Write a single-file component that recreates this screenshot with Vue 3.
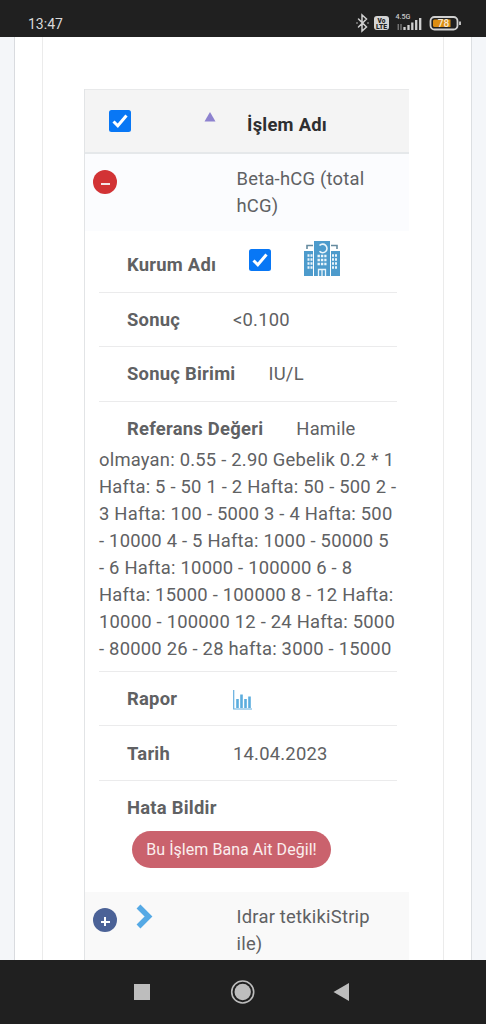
<script setup>
const reference = [
  'olmayan: 0.55 - 2.90 Gebelik 0.2 * 1',
  'Hafta: 5 - 50 1 - 2 Hafta: 50 - 500 2 -',
  '3 Hafta: 100 - 5000 3 - 4 Hafta: 500',
  '- 10000 4 - 5 Hafta: 1000 - 50000 5',
  '- 6 Hafta: 10000 - 100000 6 - 8',
  'Hafta: 15000 - 100000 8 - 12 Hafta:',
  '10000 - 100000 12 - 24 Hafta: 5000',
  '- 80000 26 - 28 hafta: 3000 - 15000',
]
</script>

<template>
  <div class="screen">
    <header class="status">
      <span class="clock">13:47</span>
      <svg class="status-icons" width="110" height="24" viewBox="0 0 110 24">
        <path d="M3.500 8l8 8-4.500 4V4l4.500 4-8 8M2 12h.01M13 12h.01" fill="none" stroke="#d0d0d0" stroke-width="1.500" stroke-linecap="round" />
        <rect x="19" y="5" width="15" height="14" rx="3" fill="#d4d4d4" />
        <g font-family="Roboto, sans-serif" font-weight="900" text-anchor="middle">
          <text x="26.500" y="11.500" font-size="6.500" fill="#222">Vo</text>
          <text x="26.500" y="17.800" font-size="6.800" fill="#222">LTE</text>
          <text x="48" y="8" font-size="7.200" font-weight="500" fill="#c8c8c8">4.5G</text>
        </g>
        <path d="M43.200 13v6M46 13v6" stroke="#999" stroke-width="1" />
        <path d="M49.500 18v-3M53.500 18v-5M57.300 18v-7.500M61.200 18v-10M65.200 18v-12" transform="translate(0 1)" stroke="#d0d0d0" stroke-width="2.300" />
        <rect x="75.500" y="6" width="27" height="12.500" rx="4" fill="none" stroke="#d0d0d0" stroke-width="1.800" />
        <path d="M105 10.500v3.500" stroke="#d0d0d0" stroke-width="1.800" />
        <path d="M79.500 8.500h16v7.500h-16a1.500 1.500 0 0 1-1.500-1.500v-4.500a1.500 1.500 0 0 1 1.500-1.500z" fill="#dc8d12" />
        <text x="88.500" y="15.800" font-family="Roboto, sans-serif" font-size="10" font-weight="500" text-anchor="middle" fill="#f5e8d2">78</text>
      </svg>
    </header>

    <main class="page">
      <section class="card">
        <div class="panel">
          <div class="table">
            <div class="thead">
              <svg class="check" viewBox="0 0 22 22"><rect width="22" height="22" rx="2.500" fill="#0877f5" /><path d="M4.500 11.500l4.300 4.300L17.500 5.500" fill="none" stroke="#fff" stroke-width="3" /></svg>
              <svg class="sort" viewBox="0 0 12 10"><path d="M6 0l5.500 9.500H.5z" fill="#8d82cf" /></svg>
              <b>İşlem Adı</b>
            </div>
            <div class="trow">
              <span class="toggle minus"><i></i></span>
              <span class="name">Beta-hCG (total<br />hCG)</span>
            </div>
            <div class="details">
              <div class="item first">
                <b>Kurum Adı</b>
                <svg class="check kurum" viewBox="0 0 22 22"><rect width="22" height="22" rx="2.500" fill="#0877f5" /><path d="M4.500 11.500l4.300 4.300L17.500 5.500" fill="none" stroke="#fff" stroke-width="3" /></svg>
                <svg class="hospital" width="36" height="35" viewBox="0 0 36 35">
                  <path d="M10 0h16v35H10zM0 10h9v25H0zM27 10h9v25h-9z" fill="#4d9bcc" />
                  <path d="M3 8V4.500h6M33 8V4.500h-6" fill="none" stroke="#668b9f" stroke-width="1.600" />
                  <path d="M15.500 4.500a4.300 4.300 0 1 1 0 5.800" fill="none" stroke="#eaf5fb" stroke-width="1.600" />
                  <g fill="none" stroke="#eaf5fb">
                    <path d="M13.500 15h9M13.500 19h9M13.500 23h9" stroke-width="2.600" stroke-dasharray="2.400 1" />
                    <path d="M3.500 14.500h5M3.500 18.500h5M3.500 22.500h5M3.500 26.500h5M28 14.500h5M28 18.500h5M28 22.500h5M28 26.500h5" stroke-width="2.400" stroke-dasharray="2 1" />
                    <path d="M14.500 35v-6.500h7V35M18 29v6" stroke-width="1.300" />
                  </g>
                </svg>
              </div>
              <div class="item"><b>Sonuç</b><span class="value">&lt;0.100</span></div>
              <div class="item"><b>Sonuç Birimi</b><span class="value">IU/L</span></div>
              <div class="reference">
                <div class="item"><b>Referans Değeri</b><span class="value">Hamile</span></div>
                <p v-for="line in reference" :key="line">{{ line }}</p>
              </div>
              <div class="item">
                <b>Rapor</b>
                <svg class="chart" width="19" height="20" viewBox="0 0 19 20"><path d="M.7 0v19H19" fill="none" stroke="#64aede" stroke-width="1.200" /><path d="M4.500 18V9M8.500 18V4.500M12.500 18V9M16.500 18V6.500" stroke="#5cadde" stroke-width="2.600" /></svg>
              </div>
              <div class="item"><b>Tarih</b><span class="value">14.04.2023</span></div>
              <div class="report">
                <b>Hata Bildir</b>
                <button>Bu İşlem Bana Ait Değil!</button>
              </div>
            </div>
            <div class="trow next">
              <span class="toggle plus"><i></i></span>
              <svg class="chevron" width="17" height="25" viewBox="0 0 17 25"><path d="M2.500 2.500l10 10-10 10" fill="none" stroke="#55a9e5" stroke-width="5.500" /></svg>
              <span class="name">Idrar tetkikiStrip<br />ile)</span>
            </div>
          </div>
        </div>
      </section>
    </main>

    <nav class="navbar">
      <svg width="486" height="64" viewBox="0 0 486 64">
        <rect x="134" y="24" width="16" height="16" fill="#bdbdbd" />
        <circle cx="242.700" cy="32" r="11" fill="none" stroke="#bdbdbd" stroke-width="1.600" />
        <circle cx="242.700" cy="32" r="8.200" fill="#bdbdbd" />
        <path d="M333.500 32L349 23v18z" fill="#bdbdbd" />
      </svg>
    </nav>
  </div>
</template>

<style>
body { margin: 0; }
</style>

<style scoped>
* { box-sizing: border-box; }
.screen {
  width: 486px;
  height: 1024px;
  overflow: hidden;
  display: flex;
  flex-direction: column;
  font-family: Roboto, "Noto Sans", sans-serif;
  font-size: 18.4px;
  letter-spacing: 0.22px;
  line-height: 27px;
  color: #606163;
}
.status {
  height: 37px;
  flex: none;
  display: flex;
  justify-content: space-between;
  background: #202020;
  padding: 11px 21px 0 28px;
  letter-spacing: 0;
}
.clock { font-size: 14px; line-height: 26px; color: #d9d9d9; }
.page {
  flex: none;
  height: 923px;
  overflow: hidden;
  background: #f4f6f9;
  padding: 0 14px;
}
.card {
  height: 100%;
  background: #fff;
  border-left: 1px solid #d9dbdf;
  border-right: 1px solid #dcdfe2;
  padding: 0 27px;
}
.panel {
  height: 100%;
  border-left: 1px solid #ebebeb;
  border-right: 1px solid #ebebeb;
  padding: 52px 34px 0 41px;
}
.table { border-left: 1px solid #e2e4e6; height: 871px; }
.thead {
  height: 65px;
  display: flex;
  align-items: flex-start;
  background: #f4f4f4;
  border-top: 1px solid #e8e9ea;
  border-bottom: 2px solid #e5e8ea;
  padding-left: 24px;
  color: #2e2f31;
}
.thead b { margin: 21px 0 0 31px; }
.check { width: 22px; height: 22px; flex: none; }
.thead .check { margin-top: 20px; }
.sort { width: 12px; height: 10px; margin: 22px 0 0 73px; }
b { font-weight: 700; letter-spacing: 0.25px; }
.trow {
  height: 77px;
  display: flex;
  align-items: flex-start;
  background: #fbfcfe;
  padding: 11px 0 0 8px;
}
.trow .name { margin-left: 119.500px; }
.toggle {
  width: 24px;
  height: 24px;
  margin-top: 5px;
  flex: none;
  border-radius: 50%;
  display: grid;
  place-items: center;
}
.toggle i { width: 9px; height: 2px; background: #f4e6e8; margin-top: 4px; }
.minus { background: #d23335; }
.plus { background: #4b6297; }
.plus i {
  height: 9px;
  margin-top: 3px;
  background: linear-gradient(#fff, #fff) center / 9px 2px no-repeat, linear-gradient(#fff, #fff) center / 2px 9px no-repeat;
}
.details { height: 661px; padding: 7px 12px 0 14px; }
.item {
  height: 54.6px;
  display: flex;
  align-items: center;
  padding-left: 28px;
  border-bottom: 1px solid #ebebec;
  white-space: nowrap;
}
.item b { min-width: 73px; }
.value { margin-left: 33px; }
.item .check { margin: -10px 0 0 33px; }
.hospital { margin: -13px 0 0 33px; }
.chart { margin: 3px 0 0 33px; }
.reference { height: 270px; border-bottom: 1px solid #ebebec; }
.reference .item { height: 44.500px; padding-top: 9px; border: 0; }
.reference p { margin: 0; white-space: nowrap; }
.report { padding: 13px 0 0 28px; }
.report b { display: block; }
button {
  display: block;
  margin: 10px 0 0 5px;
  width: 199px;
  height: 37px;
  padding: 0;
  border: 0;
  border-radius: 19px;
  background: #ca626d;
  color: #fbeeee;
  font: 16px Roboto, "Noto Sans", sans-serif;
  letter-spacing: 0.05px;
}
.next { height: 68px; background: #f9f9f9; }
.next .toggle { margin-top: 5px; }
.chevron { margin: 1px 0 0 19px; }
.trow.next .name { margin-left: 83.500px; }
.navbar { height: 64px; flex: none; background: #202020; }
.navbar svg { display: block; }
</style>
